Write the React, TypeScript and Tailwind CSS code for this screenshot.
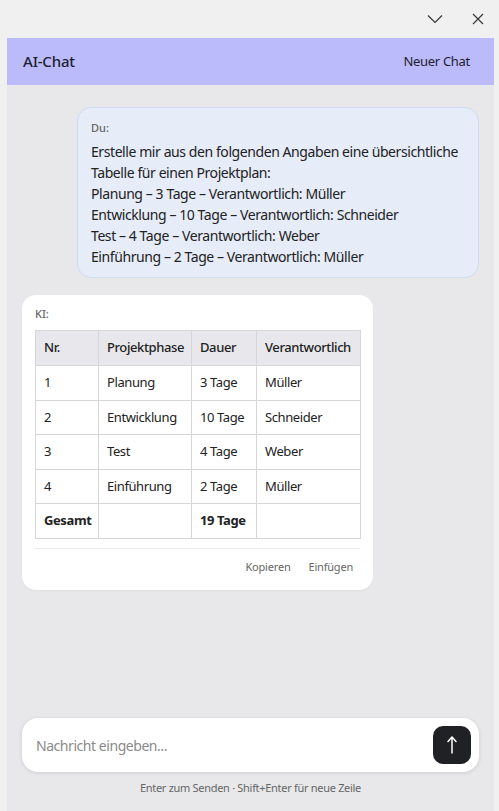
const rows = [
  { nr: '1', phase: 'Planung', dauer: '3 Tage', who: 'Müller' },
  { nr: '2', phase: 'Entwicklung', dauer: '10 Tage', who: 'Schneider' },
  { nr: '3', phase: 'Test', dauer: '4 Tage', who: 'Weber' },
  { nr: '4', phase: 'Einführung', dauer: '2 Tage', who: 'Müller' },
];

const userLines = [
  'Erstelle mir aus den folgenden Angaben eine übersichtliche',
  'Tabelle für einen Projektplan:',
  'Planung – 3 Tage – Verantwortlich: Müller',
  'Entwicklung – 10 Tage – Verantwortlich: Schneider',
  'Test – 4 Tage – Verantwortlich: Weber',
  'Einführung – 2 Tage – Verantwortlich: Müller',
];

const cell = 'border border-[#d6d6da] px-[8px]';

export default function App() {
  return (
    <div
      className="h-[811px] w-[499px] bg-[#f0f0f0] flex flex-col overflow-hidden text-[#1f1f1f]"
      style={{ fontFamily: '"Noto Sans", "Open Sans", sans-serif' }}
    >
      {/* window title bar */}
      <div className="h-[38px] flex items-center justify-end flex-shrink-0">
        <svg width="16" height="10" viewBox="0 0 16 10" className="mr-[29px]">
          <polyline points="1,1.5 8,8.5 15,1.5" fill="none" stroke="#333" strokeWidth="1.1" />
        </svg>
        <svg width="12" height="12" viewBox="0 0 12 12" className="mr-[15px]">
          <path d="M1 1 L11 11 M11 1 L1 11" stroke="#333" strokeWidth="1.1" />
        </svg>
      </div>

      <div className="flex-1 ml-[7px] mr-[5px] bg-[#e8e8ea] flex flex-col min-h-0">
        <div className="h-[47px] bg-[#bbbafa] flex items-center justify-between px-[16px] flex-shrink-0">
          <span className="text-[15px] font-medium text-[#1e1e2e] tracking-[-0.2px]">AI-Chat</span>
          <span className="text-[13px] text-[#1e1e2e] pr-[8px] tracking-[-0.3px]">Neuer Chat</span>
        </div>

        <div className="flex-1 min-h-0 px-[15px] pt-[22px] flex flex-col gap-[17px]">
          {/* user message */}
          <div className="self-end w-[402px] bg-[#e6ecf8] border border-[#cddbf3] rounded-[14px] px-[13px] pt-[12px] pb-[10px]">
            <div className="text-[11px] font-medium text-[#666]">Du:</div>
            <div className="mt-[4px] text-[14px] leading-[21px] text-[#222] tracking-[-0.42px] whitespace-nowrap">
              {userLines.map((l) => (
                <div key={l}>{l}</div>
              ))}
            </div>
          </div>

          {/* ai message */}
          <div className="self-start w-[351px] bg-white rounded-[14px] px-[13px] pt-[11px] pb-[14px] shadow-[0_1px_2px_rgba(0,0,0,0.04)]">
            <div className="text-[11px] font-medium text-[#666]">KI:</div>
            <table className="mt-[8px] w-[325px] border-collapse text-[13px] text-[#222] tracking-[-0.4px] table-fixed">
              <colgroup>
                <col className="w-[63px]" />
                <col className="w-[93px]" />
                <col className="w-[65px]" />
                <col className="w-[104px]" />
              </colgroup>
              <thead>
                <tr className="bg-[#e8e8ec] h-[35px]">
                  <th className={`${cell} text-left font-medium`}>Nr.</th>
                  <th className={`${cell} text-left font-medium`}>Projektphase</th>
                  <th className={`${cell} text-left font-medium`}>Dauer</th>
                  <th className={`${cell} text-left font-medium`}>Verantwortlich</th>
                </tr>
              </thead>
              <tbody>
                {rows.map((r) => (
                  <tr key={r.nr} className="h-[34.5px]">
                    <td className={cell}>{r.nr}</td>
                    <td className={cell}>{r.phase}</td>
                    <td className={cell}>{r.dauer}</td>
                    <td className={cell}>{r.who}</td>
                  </tr>
                ))}
                <tr className="h-[35px] font-bold">
                  <td className={cell}>Gesamt</td>
                  <td className={cell}></td>
                  <td className={cell}>19 Tage</td>
                  <td className={cell}></td>
                </tr>
              </tbody>
            </table>
            <div className="mt-[9px] border-t border-[#ececef] pt-[10px] flex justify-end gap-[18px] pr-[7px] text-[11px] text-[#666] tracking-[-0.2px]">
              <span>Kopieren</span>
              <span>Einfügen</span>
            </div>
          </div>
        </div>

        {/* input */}
        <div className="px-[15px] flex-shrink-0">
          <div className="h-[54px] bg-white rounded-[16px] shadow-[0_1px_4px_rgba(0,0,0,0.12)] flex items-center pl-[14px] pr-[8px]">
            <span className="flex-1 text-[14px] text-[#8a8a8a] tracking-[-0.45px]">Nachricht eingeben...</span>
            <div className="w-[38px] h-[38px] rounded-[10px] bg-[#202124] flex items-center justify-center">
              <svg width="12" height="20" viewBox="0 0 12 20">
                <path d="M6 2 V18 M2 6.5 L6 2 L10 6.5" fill="none" stroke="#fff" strokeWidth="1.5" strokeLinecap="round" strokeLinejoin="round" />
              </svg>
            </div>
          </div>
        </div>
        <div className="h-[32px] mb-[7px] flex items-center justify-center text-[11px] text-[#666] tracking-[-0.3px] flex-shrink-0">
          Enter zum Senden · Shift+Enter für neue Zeile
        </div>
      </div>
    </div>
  );
}
